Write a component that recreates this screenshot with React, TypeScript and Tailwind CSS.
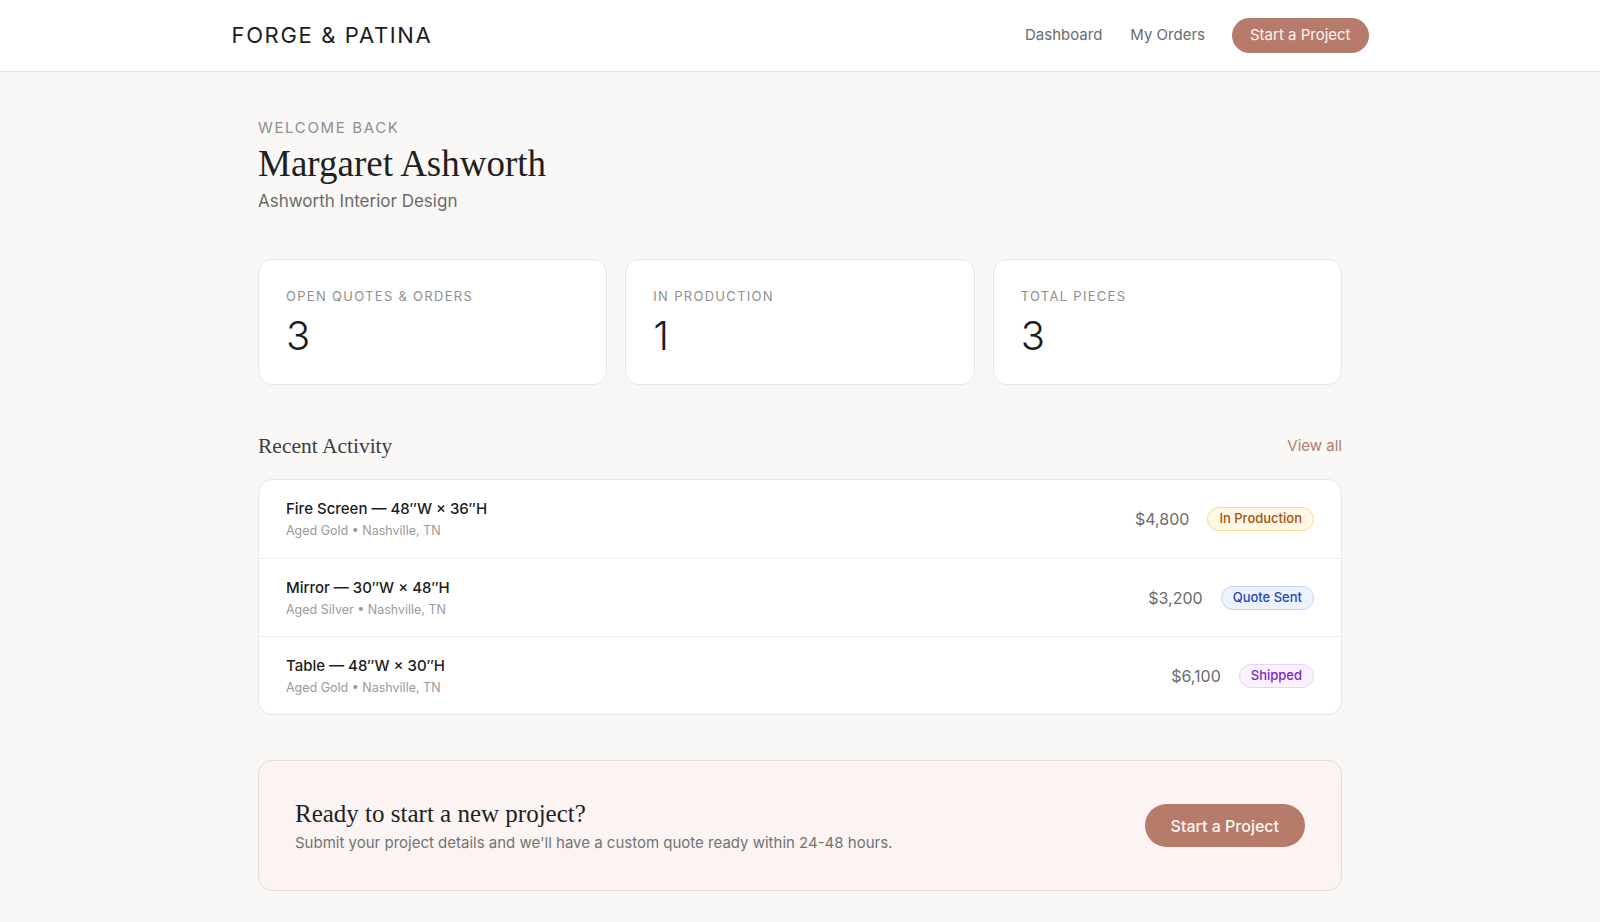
const sans = "font-['Inter','Liberation_Sans',sans-serif]"
const serif = "font-['Liberation_Serif','DejaVu_Serif',serif]"

type Status = "In Production" | "Quote Sent" | "Shipped"

const stats = [
  { label: "Open Quotes & Orders", value: "3" },
  { label: "In Production", value: "1" },
  { label: "Total Pieces", value: "3" },
]

const activity: { title: string; meta: string; price: string; status: Status }[] = [
  { title: "Fire Screen — 48″W × 36″H", meta: "Aged Gold • Nashville, TN", price: "$4,800", status: "In Production" },
  { title: "Mirror — 30″W × 48″H", meta: "Aged Silver • Nashville, TN", price: "$3,200", status: "Quote Sent" },
  { title: "Table — 48″W × 30″H", meta: "Aged Gold • Nashville, TN", price: "$6,100", status: "Shipped" },
]

const badgeClasses: Record<Status, string> = {
  "In Production": "bg-[#fef8e4] border-[#f6dc8c] text-[#a8520f]",
  "Quote Sent": "bg-[#ecf3fe] border-[#c0d6f8] text-[#1f47b8]",
  Shipped: "bg-[#f9f2fe] border-[#e6d3f9] text-[#7e22ce]",
}

function StatusBadge({ status }: { status: Status }) {
  return (
    <span className={`inline-flex h-[24px] items-center rounded-full border px-[11px] text-[13px] font-medium ${badgeClasses[status]}`}>
      {status}
    </span>
  )
}

export default function App() {
  return (
    <div className={`min-h-[922px] bg-[#f9f8f6] ${sans}`}>
      <header className="border-b border-[#e6e4e1] bg-white">
        <div className="mx-auto flex h-[71px] w-[1137px] items-center justify-between">
          <div className="text-[22px] tracking-[0.075em] text-[#1c1c1c]">FORGE &amp; PATINA</div>
          <nav className="flex items-center text-[15px] text-[#6b6b6b]">
            <a className="mr-[28px]">Dashboard</a>
            <a className="mr-[27px]">My Orders</a>
            <button className="h-[35px] rounded-full bg-[#b67b6b] px-[18px] text-[15px] text-[#fdf6f2]">
              Start a Project
            </button>
          </nav>
        </div>
      </header>

      <main className="mx-auto w-[1084px] pt-[46px] pb-[30px]">
        <div className="text-[15px] leading-[20px] tracking-[0.11em] text-[#8f8f8f]">WELCOME BACK</div>
        <h1 className={`${serif} mt-[4px] text-[37px] leading-[44px] text-[#1f1f1f]`}>Margaret Ashworth</h1>
        <div className="mt-[3px] text-[17px] leading-[24px] text-[#6a6a6a]">Ashworth Interior Design</div>

        <div className="mt-[46px] grid grid-cols-3 gap-[18px]">
          {stats.map((s) => (
            <div key={s.label} className="h-[126px] rounded-[14px] border border-[#e9e7e4] bg-white px-[27px] pt-[28px]">
              <div className="text-[13px] leading-[16px] tracking-[0.1em] text-[#8f8f8f] uppercase">{s.label}</div>
              <div className="mt-[12px] text-[40px] leading-[40px] font-light text-[#1c1c1c]">{s.value}</div>
            </div>
          ))}
        </div>

        <div className="mt-[46px] flex items-center justify-between">
          <h2 className={`${serif} text-[21.5px] leading-[30px] text-[#3d3d3d]`}>Recent Activity</h2>
          <a className="text-[15px] text-[#b07d6e]">View all</a>
        </div>

        <div className="mt-[18px] overflow-hidden rounded-[14px] border border-[#e9e7e4] bg-white">
          {activity.map((a, i) => (
            <div
              key={a.title}
              className={`flex h-[78px] items-center justify-between px-[27px] ${i > 0 ? "border-t border-[#f0eeeb]" : ""}`}
            >
              <div>
                <div className="text-[15px] leading-[22px] font-medium text-[#1c1c1c]">{a.title}</div>
                <div className="mt-[2px] text-[12.5px] leading-[18px] text-[#9a9a9a]">{a.meta}</div>
              </div>
              <div className="flex items-center gap-[18px]">
                <span className="text-[16px] text-[#6b6b6b]">{a.price}</span>
                <StatusBadge status={a.status} />
              </div>
            </div>
          ))}
        </div>

        <div className="mt-[45px] flex h-[131px] items-center justify-between rounded-[14px] border border-[#ecd9d3] bg-[#fcf4f2] px-[36px]">
          <div>
            <h3 className={`${serif} text-[25px] leading-[32px] text-[#1f1f1f]`}>Ready to start a new project?</h3>
            <p className="mt-[2px] text-[15px] leading-[22px] text-[#737373]">
              Submit your project details and we'll have a custom quote ready within 24-48 hours.
            </p>
          </div>
          <button className="h-[43px] rounded-full bg-[#b67b6b] px-[26px] text-[16px] font-medium text-[#fdf6f2]">
            Start a Project
          </button>
        </div>
      </main>
    </div>
  )
}
